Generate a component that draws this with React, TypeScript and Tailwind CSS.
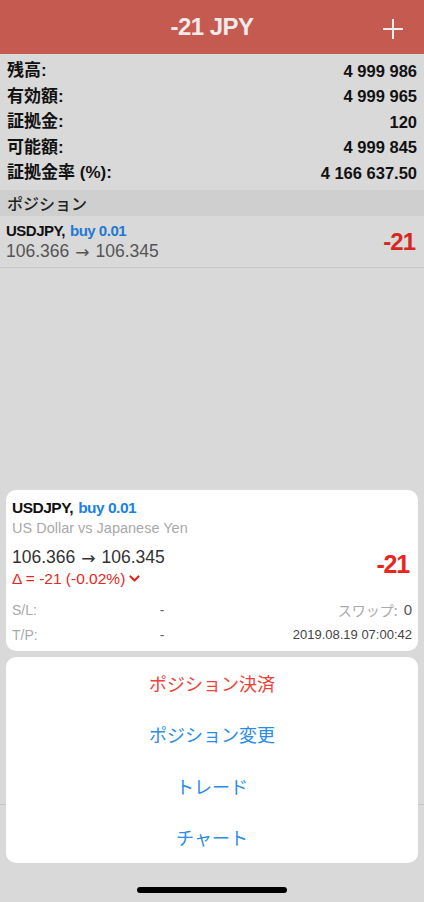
import React from "react";

const SANS = "font-['Liberation_Sans','Noto_Sans_CJK_JP',sans-serif]";

function SummaryRow({ label, value }: { label: string; value: string }) {
  return (
    <div className="flex h-[25.5px] items-center justify-between">
      <span className="font-['Liberation_Sans','Noto_Sans_CJK_JP',sans-serif] text-[17px] font-bold leading-none text-[#111]">
        {label}
      </span>
      <span className="font-['Liberation_Sans',sans-serif] text-[16.5px] font-bold leading-none text-[#111]">
        {value}
      </span>
    </div>
  );
}

function PlusIcon() {
  return (
    <svg width="22" height="22" viewBox="0 0 22 22" fill="none">
      <path d="M11 1V21M1 11H21" stroke="#f3eeee" strokeWidth="2" />
    </svg>
  );
}

function Chevron() {
  return (
    <svg width="11" height="8" viewBox="0 0 11 8" fill="none" className="ml-[4px] mt-[1px]">
      <path d="M1.5 1.5L5.5 5.5L9.5 1.5" stroke="#e8261c" strokeWidth="2.2" strokeLinecap="round" strokeLinejoin="round" />
    </svg>
  );
}

function Arrow() {
  return <span className="mx-[6px] font-['DejaVu_Sans',sans-serif] text-[17px] leading-none">→</span>;
}

export default function App() {
  return (
    <div className={`relative h-[902px] w-[424px] overflow-hidden bg-[#d9d9d9] ${SANS}`}>
      {/* Background page */}
      <div className="flex h-full flex-col">
        <div className="relative flex h-[54px] shrink-0 items-center justify-center bg-[#c55a51]">
          <span className="font-['Liberation_Sans',sans-serif] text-[24px] font-bold tracking-[-0.5px] text-[#f1eaea]">
            -21 JPY
          </span>
          <div className="absolute right-[20px] top-[18px]">
            <PlusIcon />
          </div>
        </div>

        <div className="px-[7px] pb-[4.5px] pt-[4px]">
          <SummaryRow label="残高:" value="4 999 986" />
          <SummaryRow label="有効額:" value="4 999 965" />
          <SummaryRow label="証拠金:" value="120" />
          <SummaryRow label="可能額:" value="4 999 845" />
          <SummaryRow label="証拠金率 (%):" value="4 166 637.50" />
        </div>

        <div className="flex h-[26px] items-center bg-[#cfcfcf] px-[7px]">
          <span className="font-['Noto_Sans_CJK_JP',sans-serif] text-[16px] font-medium leading-none text-[#222]">
            ポジション
          </span>
        </div>

        <div className="flex h-[52px] items-center justify-between border-b border-[#c6c6c6] pl-[6px] pr-[9px]">
          <div className="flex flex-col pb-[3px] pt-[4px]">
            <div className="flex h-[20px] items-center text-[15px] font-bold leading-none tracking-[-0.5px]">
              <span className="text-[#111]">USDJPY,</span>
              <span className="ml-[5px] text-[#1f78d6]">buy 0.01</span>
            </div>
            <div className="flex h-[24px] items-center text-[17.5px] leading-none text-[#555]">
              <span>106.366</span>
              <Arrow />
              <span>106.345</span>
            </div>
          </div>
          <span className="font-['Liberation_Sans',sans-serif] text-[24px] font-bold leading-none tracking-[-1px] text-[#d4281f]">
            -21
          </span>
        </div>

        <div className="flex-1" />

        <div className="h-[98px] shrink-0 border-t border-[#c4c4c4]" />
      </div>

      {/* Action sheet overlay */}
      <div className="absolute bottom-[39px] left-[6px] right-[6px] flex flex-col gap-[6px]">
        <div className="flex h-[161px] flex-col rounded-[10px] bg-white pl-[6px] pr-[6px] pt-[8px]">
          <div className="flex h-[20px] items-center text-[15.5px] font-bold leading-none tracking-[-0.5px]">
            <span className="text-[#111]">USDJPY,</span>
            <span className="ml-[5px] text-[#1a7fe8]">buy 0.01</span>
          </div>
          <div className="flex h-[20px] items-center text-[14.5px] leading-none text-[#a9a9a9]">
            US Dollar vs Japanese Yen
          </div>
          <div className="mt-[10px] flex h-[41px] items-center justify-between">
            <div className="flex flex-col">
              <div className="flex h-[20px] items-center text-[17.5px] leading-none text-[#333]">
                <span>106.366</span>
                <Arrow />
                <span>106.345</span>
              </div>
              <div className="flex h-[21px] items-center text-[15.5px] leading-none text-[#e8261c]">
                <span>Δ = -21 (-0.02%)</span>
                <Chevron />
              </div>
            </div>
            <span className="mb-[9px] mr-[3px] font-['Liberation_Sans',sans-serif] text-[25px] font-bold leading-none tracking-[-1.2px] text-[#e8261c]">
              -21
            </span>
          </div>
          <div className="mt-[8px] flex h-[25px] items-center text-[14px] leading-none">
            <span className="w-[144px] text-[#a9a9a9]">S/L:</span>
            <span className="w-[12px] text-center text-[#666]">-</span>
            <span className="flex flex-1 items-center justify-end">
              <span className="font-['Noto_Sans_CJK_JP',sans-serif] text-[14px] text-[#a9a9a9]">スワップ:</span>
              <span className="ml-[6px] text-[15px] text-[#555]">0</span>
            </span>
          </div>
          <div className="flex h-[25px] items-center text-[14px] leading-none">
            <span className="w-[144px] text-[#a9a9a9]">T/P:</span>
            <span className="w-[12px] text-center text-[#666]">-</span>
            <span className="flex-1 text-right text-[13px] text-[#444]">2019.08.19 07:00:42</span>
          </div>
        </div>

        <div className="flex h-[206px] flex-col rounded-[10px] bg-white font-['Noto_Sans_CJK_JP',sans-serif] text-[18px] leading-none">
          <div className="flex h-[51.5px] items-center justify-center text-[#ef4136]">ポジション決済</div>
          <div className="flex h-[51.5px] items-center justify-center text-[#2b8ce6]">ポジション変更</div>
          <div className="flex h-[51.5px] items-center justify-center text-[#2b8ce6]">トレード</div>
          <div className="flex h-[51.5px] items-center justify-center text-[#2b8ce6]">チャート</div>
        </div>
      </div>

      {/* Home indicator */}
      <div className="absolute bottom-[9px] left-[137px] h-[6px] w-[150px] rounded-full bg-black" />
    </div>
  );
}
